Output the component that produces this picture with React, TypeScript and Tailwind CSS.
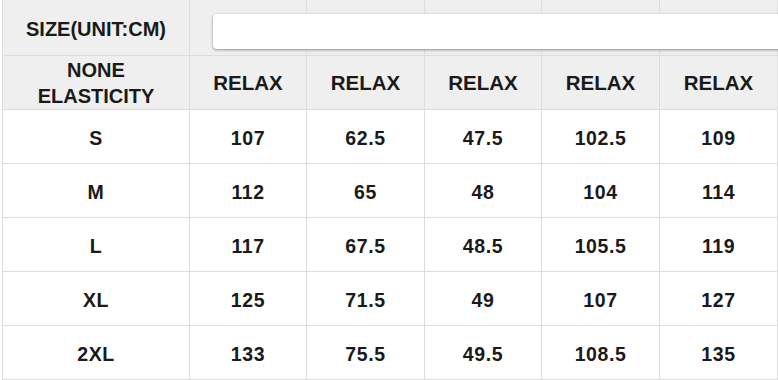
const cols = 'grid-cols-[187px_117px_118px_117px_118px_118px]';

const rows: [string, string, string, string, string, string][] = [
  ['S', '107', '62.5', '47.5', '102.5', '109'],
  ['M', '112', '65', '48', '104', '114'],
  ['L', '117', '67.5', '48.5', '105.5', '119'],
  ['XL', '125', '71.5', '49', '107', '127'],
  ['2XL', '133', '75.5', '49.5', '108.5', '135'],
];

const cell = 'flex items-center justify-center border-r border-b border-[#dddddd] text-center font-bold text-[#1a1a1a]';

export default function App() {
  return (
    <div
      className="relative w-[778px] h-[380px] overflow-hidden bg-white"
      style={{ fontFamily: '"Liberation Sans", Arial, sans-serif' }}
    >
      <div className={`ml-[2px] grid ${cols} border-l border-[#dddddd]`}>
        {/* header row 1 */}
        <div className={`${cell} h-[56px] pt-[3px] bg-[#efefef] text-[20px]`}>SIZE(UNIT:CM)</div>
        {[0, 1, 2, 3, 4].map((i) => (
          <div key={i} className={`${cell} h-[56px] bg-[#efefef]`} />
        ))}

        {/* header row 2 */}
        <div className={`${cell} h-[54px] bg-[#efefef] text-[20px] leading-[26px]`}>
          NONE
          <br />
          ELASTICITY
        </div>
        {[0, 1, 2, 3, 4].map((i) => (
          <div key={i} className={`${cell} h-[54px] pt-[2px] bg-[#efefef] text-[20.5px]`}>
            RELAX
          </div>
        ))}

        {/* data */}
        {rows.map((r) =>
          r.map((v, j) => (
            <div key={r[0] + j} className={`${cell} h-[54px] pt-[4px] bg-white text-[19.5px] tracking-[0.03em]`}>
              {v}
            </div>
          ))
        )}
      </div>

      {/* input-like white box over the first header row */}
      <div className="absolute left-[213px] top-[14px] h-[35px] w-[600px] rounded-l-[4px] bg-white shadow-[0_1px_3px_rgba(0,0,0,0.4)]" />
    </div>
  );
}
